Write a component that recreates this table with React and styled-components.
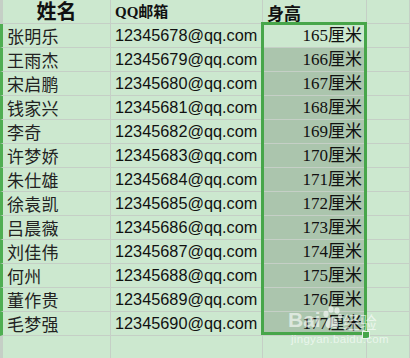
import { Fragment } from "react";
import styled, { createGlobalStyle } from "styled-components";

const GlobalStyle = createGlobalStyle`
  html, body {
    margin: 0;
    padding: 0;
    background: #cce8cf;
    overflow: hidden;
  }
`;

const Sheet = styled.div`
  position: relative;
  display: grid;
  grid-template-columns: 111px 152px 104px 1fr;
  grid-auto-rows: 24px;
  width: 410px;
  height: 358px;
  overflow: hidden;
  background: #cce8cf;
`;

const Cell = styled.div`
  display: flex;
  align-items: center;
  justify-content: ${({ $align }) =>
    $align === "right" ? "flex-end" : $align === "center" ? "center" : "flex-start"};
  box-sizing: border-box;
  padding: 0 4px;
  border-right: 1px solid #c5cfc6;
  border-bottom: 1px solid #c5cfc6;
  border-left: ${({ $edge }) => ($edge ? `3px solid ${$edge}` : "none")};
  background: ${({ $selected }) => ($selected ? "#abc5ad" : "transparent")};
  white-space: nowrap;
  overflow: hidden;
  color: #111;
`;

const HeadText = styled.span`
  font-family: "Liberation Serif", "Noto Sans CJK SC", serif;
  font-weight: 700;
  font-size: ${({ $size }) => $size}px;
  line-height: 1;
  margin-top: ${({ $drop }) => $drop || 0}px;
`;

const Name = styled.span`
  font-family: "Noto Sans CJK SC", sans-serif;
  font-size: 17px;
  letter-spacing: 0.3px;
  color: #222;
  line-height: 1;
`;

const Email = styled.span`
  font-family: "Liberation Sans", Arial, sans-serif;
  font-size: 16.3px;
  color: #111;
  line-height: 1;
`;

const Height = styled.span`
  font-family: "Liberation Serif", "Noto Sans CJK SC", serif;
  font-size: 17px;
  color: #111;
  line-height: 1;
`;

const SelectionBox = styled.div`
  position: absolute;
  left: 261px;
  top: 22px;
  width: 106px;
  height: 313px;
  box-sizing: border-box;
  border: 3px solid #47a64a;
  pointer-events: none;
`;

const FillHandle = styled.div`
  position: absolute;
  left: 362px;
  top: 331px;
  width: 6px;
  height: 6px;
  background: #47a64a;
  border: 1px solid #e8f3e8;
`;

const Watermark = styled.div`
  position: absolute;
  left: 288px;
  top: 306px;
  display: flex;
  flex-direction: column;
  align-items: flex-start;
  color: rgba(255, 255, 255, 0.6);
  pointer-events: none;
`;

const MarkRow = styled.div`
  display: flex;
  align-items: flex-end;
  gap: 1px;
`;

const MarkBai = styled.span`
  font-family: "Liberation Sans", Arial, sans-serif;
  font-weight: 700;
  font-size: 21px;
  line-height: 1;
`;

const MarkJing = styled.span`
  font-family: "Noto Sans CJK SC", sans-serif;
  font-size: 17px;
  line-height: 1;
`;

const MarkUrl = styled.span`
  font-family: "Liberation Sans", Arial, sans-serif;
  font-size: 11.5px;
  letter-spacing: 0.3px;
  margin-top: 3px;
  margin-left: 3px;
`;

const people = [
  ["张明乐", 165],
  ["王雨杰", 166],
  ["宋启鹏", 167],
  ["钱家兴", 168],
  ["李奇", 169],
  ["许梦娇", 170],
  ["朱仕雄", 171],
  ["徐袁凯", 172],
  ["吕晨薇", 173],
  ["刘佳伟", 174],
  ["何州", 175],
  ["董作贵", 176],
  ["毛梦强", 177],
];

function Paw() {
  return (
    <svg width="20" height="24" viewBox="0 0 20 24">
      <g fill="rgba(255,255,255,0.6)">
        <ellipse cx="4" cy="8" rx="2.6" ry="3.2" />
        <ellipse cx="9" cy="3.5" rx="2.6" ry="3.2" />
        <ellipse cx="15" cy="4.5" rx="2.6" ry="3.2" />
        <ellipse cx="18" cy="10.5" rx="2" ry="2.8" />
        <path d="M10 11 C6 11 3 17 4 20 C5 23 9 22 10 21 C11 22 15 23 16 20 C17 17 14 11 10 11 Z" />
      </g>
    </svg>
  );
}

export default function App() {
  return (
    <>
      <GlobalStyle />
      <Sheet>
        <Cell $align="center" $edge="#c5cfc6">
          <HeadText $size={20}>姓名</HeadText>
        </Cell>
        <Cell>
          <HeadText $size={15} $drop={2}>QQ邮箱</HeadText>
        </Cell>
        <Cell>
          <HeadText $size={17} $drop={6}>身高</HeadText>
        </Cell>
        <Cell />

        {people.map(([name, h], i) => (
          <Fragment key={name}>
            <Cell $edge="#4fae52">
              <Name>{name}</Name>
            </Cell>
            <Cell>
              <Email>{`${12345678 + i}@qq.com`}</Email>
            </Cell>
            <Cell $align="right" $selected={i > 0}>
              <Height>{h}厘米</Height>
            </Cell>
            <Cell />
          </Fragment>
        ))}

        <Cell $edge="#c5cfc6" />
        <Cell />
        <Cell />
        <Cell />

        <SelectionBox />
        <FillHandle />
        <Watermark>
          <MarkRow>
            <MarkBai>Bai</MarkBai>
            <Paw />
            <MarkJing>经验</MarkJing>
          </MarkRow>
          <MarkUrl>jingyan.baidu.com</MarkUrl>
        </Watermark>
      </Sheet>
    </>
  );
}
